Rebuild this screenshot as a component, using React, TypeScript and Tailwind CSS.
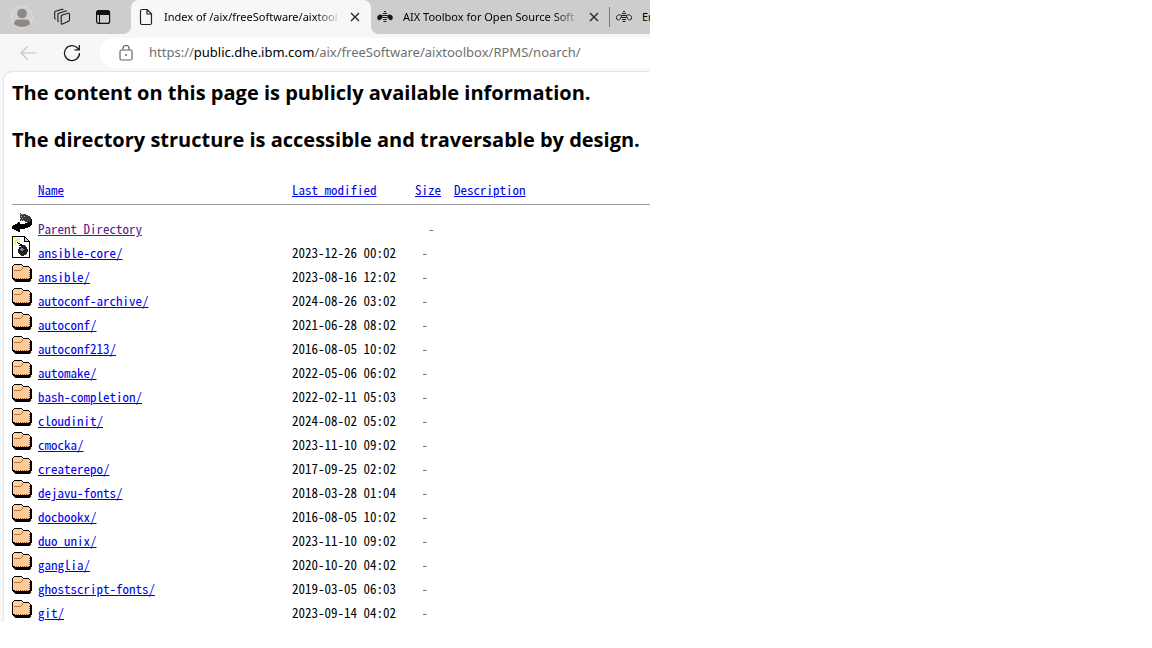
import { ReactNode } from "react";

const entries = [
  { name: "ansible-core/", modified: "2023-12-26 00:02", icon: "bomb" },
  { name: "ansible/", modified: "2023-08-16 12:02", icon: "folder" },
  { name: "autoconf-archive/", modified: "2024-08-26 03:02", icon: "folder" },
  { name: "autoconf/", modified: "2021-06-28 08:02", icon: "folder" },
  { name: "autoconf213/", modified: "2016-08-05 10:02", icon: "folder" },
  { name: "automake/", modified: "2022-05-06 06:02", icon: "folder" },
  { name: "bash-completion/", modified: "2022-02-11 05:03", icon: "folder" },
  { name: "cloudinit/", modified: "2024-08-02 05:02", icon: "folder" },
  { name: "cmocka/", modified: "2023-11-10 09:02", icon: "folder" },
  { name: "createrepo/", modified: "2017-09-25 02:02", icon: "folder" },
  { name: "dejavu-fonts/", modified: "2018-03-28 01:04", icon: "folder" },
  { name: "docbookx/", modified: "2016-08-05 10:02", icon: "folder" },
  { name: "duo_unix/", modified: "2023-11-10 09:02", icon: "folder" },
  { name: "ganglia/", modified: "2020-10-20 04:02", icon: "folder" },
  { name: "ghostscript-fonts/", modified: "2019-03-05 06:03", icon: "folder" },
  { name: "git/", modified: "2023-09-14 04:02", icon: "folder" },
];

function FolderIcon() {
  return (
    <svg width="20" height="22" viewBox="0 0 20 22" shapeRendering="crispEdges" aria-hidden="true">
      <path d="M2 4h8v1h1v1h6v1h1v1h1v1h1v10h-1v2h-1v1H3v-1H2v-1H1v-1H0V6h1V5h1z" fill="#000" />
      <path d="M2 5h8v1h1v1h6v1h1v10h-1v1H3v-1H1V6h1z" fill="#ffcc99" />
      <path d="M2 10h7v1H2zM9 9h1v1H9zM10 7h1v2h-1z" fill="#b27a47" />
      <path d="M4 18h1v1H4zM6 18h1v1H6zM8 18h1v1H8zM10 18h1v1h-1zM12 18h1v1h-1zM14 18h1v1h-1zM16 18h1v1h-1zM17 16h1v1h-1zM17 14h1v1h-1zM17 12h1v1h-1zM17 10h1v1h-1z" fill="#996633" />
    </svg>
  );
}

function BombIcon() {
  return (
    <svg width="20" height="22" viewBox="0 0 20 22" shapeRendering="crispEdges" aria-hidden="true">
      <path d="M0 0h13v1h1v1h1v1h1v1h1v1h1v17H0z" fill="#000" />
      <path d="M1 1h11v5h5v15H1z" fill="#fff" />
      <path d="M13 2h1v1h1v1h1v1h-3z" fill="#ccc" />
      <path d="M9 9h4v1h1v1h1v2h1v3h-1v2h-1v1h-2v1H9v-1H8v-1H7v-1H6v-4h1v-2h2z" fill="#222" />
      <path d="M9 12h2v1h1v1h-1v1H9v-1H8v-1h1z" fill="#888" />
      <path d="M8 8h2v1h1v1H7V9h1zM6 7h2v1H6zM5 6h1v1H5z" fill="#000" />
      <path d="M2 2h1v1H2zM5 2h1v2H5zM7 3h1v1H7zM3 4h3v1H3zM2 6h2v1H2zM7 5h1v1H7zM3 8h1v1H3z" fill="#ffcc00" />
    </svg>
  );
}

function BackIcon() {
  return (
    <svg width="20" height="22" viewBox="0 0 20 22" shapeRendering="crispEdges" aria-hidden="true">
      <path d="M8 1h1v1h5v1h2v1h2v1h1v2h1v3h-2v1h-3v-1h-2V9H8z" fill="#3a3a3a" />
      <path d="M8 2h1v1H8zM10 2h1v1h-1zM9 4h1v1H9zM8 6h1v1H8zM10 6h1v1h-1zM9 8h1v1H9zM12 4h1v1h-1zM11 8h1v1h-1z" fill="#aaa" />
      <path d="M8 10v2h5v-1h3v-1h2V9h1V7h1v6h-1v1h-1v1h-2v1h-3v1H8v3H6v-1H4v-1H2v-1H0v-3h1v-1h2v-1h2v-1h1v-1z" fill="#000" />
    </svg>
  );
}

function BeeIcon({ outline = false }: { outline?: boolean }) {
  return (
    <svg width="16" height="12" viewBox="0 0 16 12" className="shrink-0" aria-hidden="true">
      <path d="M7 0h2v1H7zM6 2h4v1H6zM5.500 4h5v1h-5zM5.500 6h5v1h-5zM6 8h4v1H6zM6.500 10h3v1h-3z" fill="#161616" />
      <path
        d="M5.500 4.500C3.500 3 .5 4 .5 6.500S2 9.500 3.500 8.500 5 6.500 5.500 4.500zM10.500 4.500c2-1.500 5-.5 5 2s-1.500 3-3 2-1.500-2-2-4z"
        fill={outline ? "none" : "#161616"}
        stroke="#161616"
        strokeWidth={outline ? 1 : 0.5}
      />
    </svg>
  );
}

function CloseButton() {
  return (
    <button aria-label="Close tab" className="flex size-4 shrink-0 items-center justify-center">
      <svg width="10" height="10" viewBox="0 0 10 10">
        <path d="M1 1l8 8M9 1l-8 8" stroke="#222" strokeWidth="1.3" />
      </svg>
    </button>
  );
}

function TabBar() {
  return (
    <div className="flex h-[34px] bg-linear-to-b from-[#cdcdcd] from-50% to-[#f7f7f7] to-50% text-[11px]">
      <div className="flex w-[131px] shrink-0 items-center rounded-br-lg bg-[#cdcdcd] pl-[11px]">
        <button aria-label="Profile">
          <svg width="22" height="22" viewBox="0 0 22 22">
            <circle cx="11" cy="11" r="10.500" fill="#d2d0ce" stroke="#e0ddda" />
            <circle cx="11" cy="7.500" r="4.800" fill="#8d8986" />
            <path d="M3 18c0-3 1.500-4.500 4-4.500h8c2.500 0 4 1.500 4 4.500-4 4-12 4-16 0z" fill="#8d8986" />
          </svg>
        </button>
        <button aria-label="Workspaces" className="ml-5">
          <svg width="18" height="18" viewBox="0 0 18 18" fill="none" stroke="#1b1b1b" strokeWidth="1.100" strokeLinejoin="round">
            <path d="M8.500 7.300l6.800-2q1.200-.3 1.200 1v5.500q0 1-1 1.400l-6 2.800q-1.300.5-1.300-.8V8.300q0-.8.8-1z" />
            <path d="M5.800 13.800q-.9-.2-.9-1.300V6.300q0-.8.8-1.100l7-2.200q.8-.2 1.200.5" />
            <path d="M2.600 11.300q-.9-.2-.9-1.300V4.400q0-.8.8-1.100l6.700-2q.8-.2 1.200.5" />
          </svg>
        </button>
        <button aria-label="Tab actions" className="ml-6">
          <svg width="16" height="16" viewBox="0 0 16 16">
            <rect x="1.600" y="1.600" width="13" height="12.800" rx="2" fill="none" stroke="#111" strokeWidth="1.200" />
            <path d="M1.500 3.500a2 2 0 012-2h9a2 2 0 012 2V6h-13z" fill="#111" />
            <path d="M4.500 6v8" stroke="#111" />
          </svg>
        </button>
      </div>
      <div className="flex w-[240px] shrink-0 items-center rounded-t-lg bg-[#f7f7f7] pl-2">
        <svg width="14" height="18" viewBox="0 0 14 18" fill="none" stroke="#222" strokeWidth="1.200" strokeLinejoin="round" className="shrink-0">
          <path d="M3 1.500h5l4.500 4.500v9q0 1.500-1.500 1.500H3Q1.500 16.500 1.500 15V3Q1.500 1.500 3 1.500z" />
          <path d="M8 1.500V6h4.500" />
        </svg>
        <span className="ml-[11px] w-[178px] overflow-hidden whitespace-nowrap mask-r-from-85%">Index of /aix/freeSoftware/aixtool</span>
        <span className="ml-[5px] flex"><CloseButton /></span>
      </div>
      <div className="flex min-w-0 flex-1 items-center rounded-bl-lg bg-[#cdcdcd] pl-1.5">
        <BeeIcon />
        <span className="ml-2.5 w-[178px] shrink-0 overflow-hidden whitespace-nowrap mask-r-from-85%">AIX Toolbox for Open Source Soft</span>
        <span className="ml-[5px] flex"><CloseButton /></span>
        <span className="ml-[7px] h-5 w-px shrink-0 bg-[#777]"></span>
        <span className="ml-1.5 flex"><BeeIcon outline /></span>
        <span className="ml-2.5">En</span>
      </div>
    </div>
  );
}

function AddressBar() {
  return (
    <div className="flex h-[38px] items-center pl-5">
      <button aria-label="Back">
        <svg width="16" height="14" viewBox="0 0 16 14" fill="none" stroke="#c4c4c4" strokeWidth="1.200">
          <path d="M16 7H1M7.500.5L1 7l6.500 6.500" />
        </svg>
      </button>
      <button aria-label="Refresh" className="ml-[27px]">
        <svg width="18" height="18" viewBox="0 0 18 18" fill="none" stroke="#1b1b1b" strokeWidth="1.300">
          <path d="M16.500 9A7.500 7.500 0 1 1 14.500 4L16 5.500" />
          <path d="M16.300 1v4.800h-4.800" />
        </svg>
      </button>
      <label className="relative ml-[19px] flex h-[30px] min-w-0 flex-1 items-center rounded-l-full bg-white pl-[19px] text-[13px] whitespace-nowrap text-[#707070]">
        <svg width="14" height="16" viewBox="0 0 14 16" fill="none" stroke="#666" strokeWidth="1.200" className="shrink-0">
          <rect x="1" y="5" width="12" height="10" rx="1.500" />
          <path d="M4 5V3.500a3 3 0 016 0V5" />
          <circle cx="7" cy="10" r=".9" fill="#666" stroke="none" />
        </svg>
        <span className="ml-4">https://<span className="text-black">public.dhe.ibm.com</span>/aix/freeSoftware/aixtoolbox/RPMS/noarch/</span>
        <input type="text" className="absolute inset-0 bg-transparent outline-none" />
      </label>
    </div>
  );
}

function Row({ icon, children, modified, size }: { icon: ReactNode; children: ReactNode; modified?: string; size: string }) {
  return (
    <tr className="h-6 align-top">
      <td>{icon}</td>
      <td className="pt-2.5">{children}</td>
      <td className="pt-2.5">{modified}</td>
      <td className="pt-2.5 whitespace-pre text-gray-500">{size}</td>
      <td></td>
    </tr>
  );
}

export default function App() {
  return (
    <div className="w-full max-w-[650px] overflow-hidden bg-[#f7f7f7] font-['Noto_Sans',sans-serif] text-black">
      <header>
        <TabBar />
        <AddressBar />
      </header>
      <main className="ml-1 rounded-tl-lg bg-white pt-[7px] pb-0.5 pl-2 shadow-[0_0_2px_rgba(0,0,0,0.25)]">
        <h2 className="mb-[19px] font-['Open_Sans',sans-serif] text-xl leading-7 font-bold whitespace-nowrap">The content on this page is publicly available information.</h2>
        <h2 className="mb-[19px] font-['Open_Sans',sans-serif] text-xl leading-7 font-bold whitespace-nowrap">The directory structure is accessible and traversable by design.</h2>
        <table className="w-full table-fixed font-['Noto_Sans_Mono_CJK_JP','Liberation_Mono',monospace] text-[13px] leading-[14px]">
          <colgroup>
            <col className="w-[26px]" />
            <col className="w-[254px]" />
            <col className="w-[123px]" />
            <col className="w-[39px]" />
            <col />
          </colgroup>
          <thead>
            <tr className="h-6 text-left align-top text-[#0000ee]">
              <td></td>
              <th className="pt-2.5 font-normal"><a href="?C=N;O=D" className="underline">Name</a></th>
              <th className="pt-2.5 font-normal"><a href="?C=M;O=A" className="underline">Last modified</a></th>
              <th className="pt-2.5 font-normal"><a href="?C=S;O=A" className="underline">Size</a></th>
              <th className="pt-2.5 font-normal"><a href="?C=D;O=A" className="underline">Description</a></th>
            </tr>
          </thead>
          <tbody>
            <tr>
              <td colSpan={5}><hr className="my-[7px] border-[#999]" /></td>
            </tr>
            <Row icon={<BackIcon />} size="  -">
              <a href="../" className="text-[#551a8b] underline">Parent Directory</a>
            </Row>
            {entries.map((e) => (
              <Row key={e.name} icon={e.icon === "bomb" ? <BombIcon /> : <FolderIcon />} modified={e.modified} size=" -">
                <a href={e.name} className="text-[#0000ee] underline">{e.name}</a>
              </Row>
            ))}
          </tbody>
        </table>
      </main>
    </div>
  );
}
